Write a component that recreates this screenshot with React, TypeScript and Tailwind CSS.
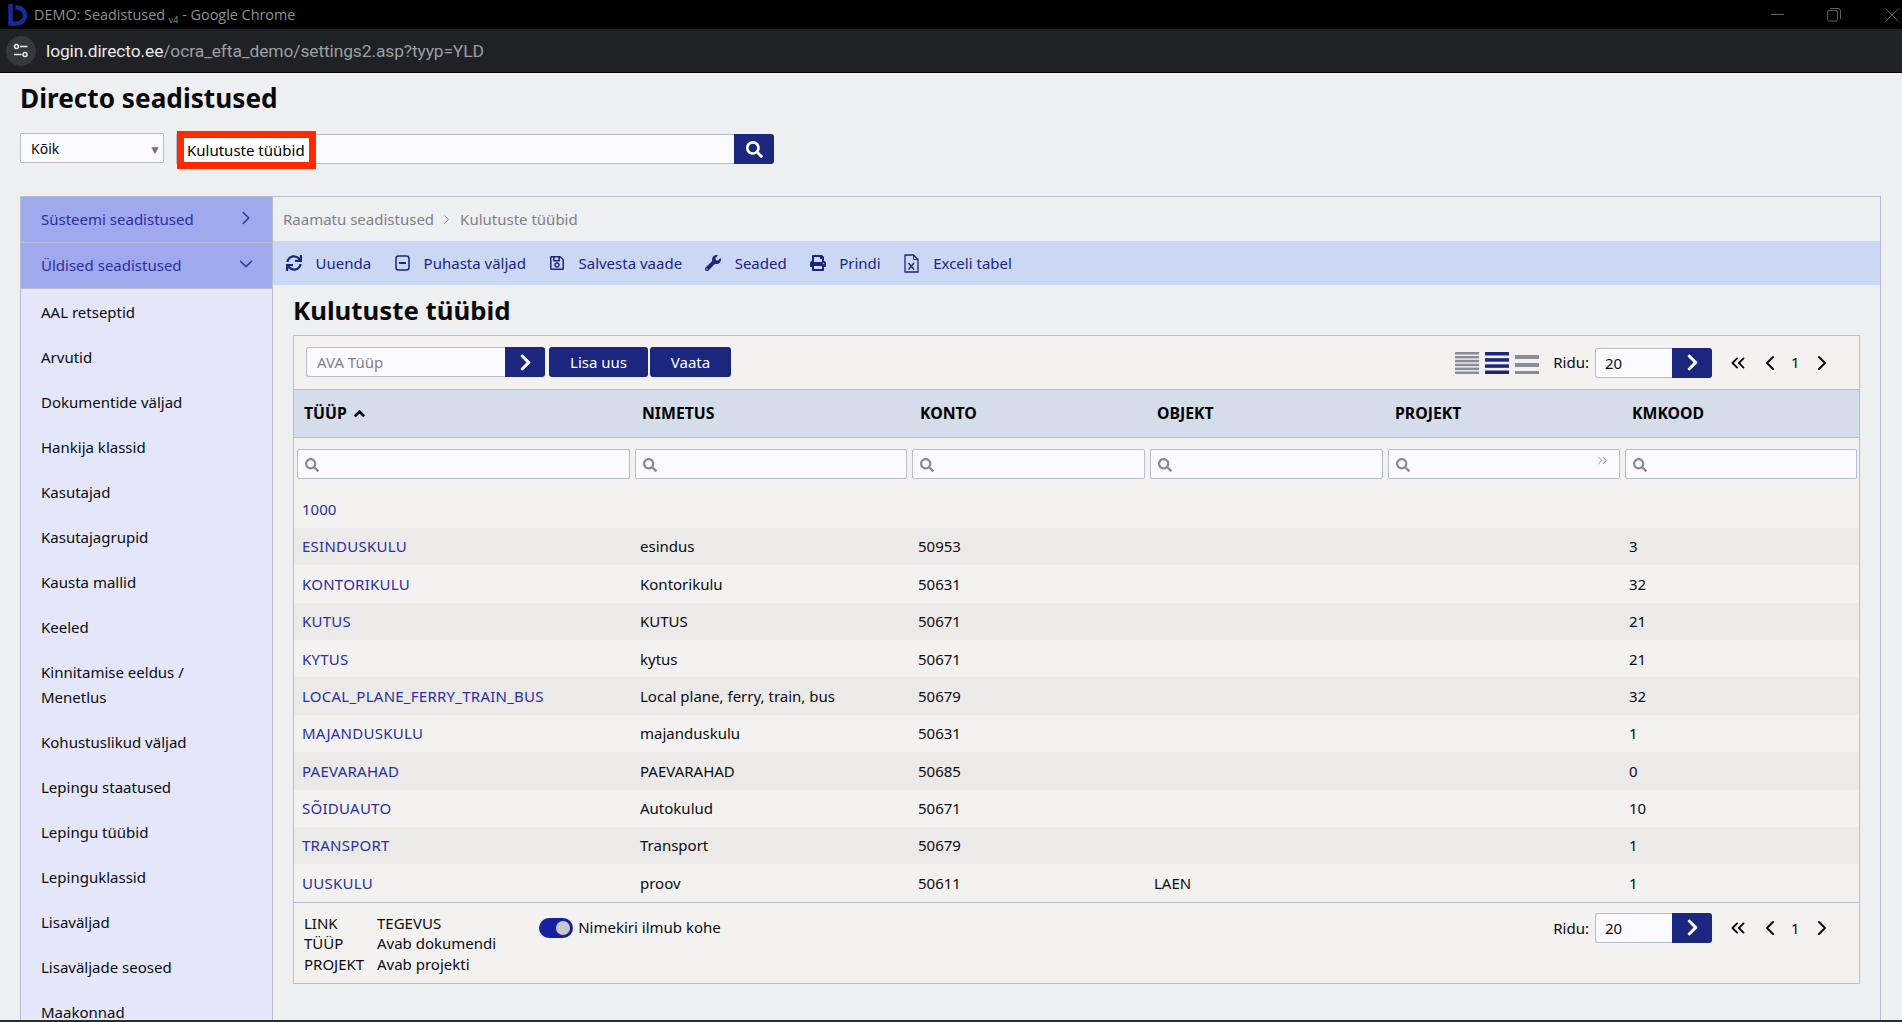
import React from "react";
import { FaSearch, FaSync, FaRegSave, FaWrench, FaPrint, FaChevronRight, FaAngleUp } from "react-icons/fa";
import { ChevronLeft, ChevronRight, ChevronsLeft, ChevronsRight, ChevronDown } from "lucide-react";

const sideItems = [
  "AAL retseptid", "Arvutid", "Dokumentide väljad", "Hankija klassid", "Kasutajad", "Kasutajagrupid",
  "Kausta mallid", "Keeled", "Kinnitamise eeldus / Menetlus", "Kohustuslikud väljad", "Lepingu staatused",
  "Lepingu tüübid", "Lepinguklassid", "Lisaväljad", "Lisaväljade seosed", "Maakonnad",
];

const rows = [
  ["ESINDUSKULU", "esindus", "50953", "", "", "3"],
  ["KONTORIKULU", "Kontorikulu", "50631", "", "", "32"],
  ["KUTUS", "KUTUS", "50671", "", "", "21"],
  ["KYTUS", "kytus", "50671", "", "", "21"],
  ["LOCAL_PLANE_FERRY_TRAIN_BUS", "Local plane, ferry, train, bus", "50679", "", "", "32"],
  ["MAJANDUSKULU", "majanduskulu", "50631", "", "", "1"],
  ["PAEVARAHAD", "PAEVARAHAD", "50685", "", "", "0"],
  ["SÕIDUAUTO", "Autokulud", "50671", "", "", "10"],
  ["TRANSPORT", "Transport", "50679", "", "", "1"],
  ["UUSKULU", "proov", "50611", "LAEN", "", "1"],
];

function MinusSquare() {
  return (
    <svg width="15" height="16" viewBox="0 0 15 16" fill="none" stroke="currentColor" strokeWidth="1.500">
      <rect x="1" y="1" width="13" height="14" rx="2.500" />
      <path d="M4 8h7" strokeWidth="2" />
    </svg>
  );
}

function ExcelFile() {
  return (
    <svg width="15" height="19" viewBox="0 0 15 19" fill="none" stroke="currentColor" strokeWidth="1.300">
      <path d="M1 1h8.500L14 5.500V18H1z" />
      <path d="M9.500 1v4.500H14" strokeWidth="1" />
      <path d="M4.500 9l5.500 6.500M10 9l-5.500 6.500" strokeWidth="1.500" />
    </svg>
  );
}

const toolbar = [
  { icon: <FaSync size={16} />, label: "Uuenda", cls: "" },
  { icon: <MinusSquare />, label: "Puhasta väljad", cls: "ml-[23px]" },
  { icon: <FaRegSave size={16} />, label: "Salvesta vaade", cls: "ml-[23px]" },
  { icon: <FaWrench size={16} />, label: "Seaded", cls: "ml-[23px]" },
  { icon: <FaPrint size={16} />, label: "Prindi", cls: "ml-[23px]" },
  { icon: <ExcelFile />, label: "Exceli tabel", cls: "ml-[23px]" },
];

function Density({ bars, h, color }: { bars: number; h: number; color: string }) {
  const step = bars === 3 ? 8 : (22 - h) / (bars - 1);
  const top = bars === 3 ? 3 : 0;
  return (
    <svg width="24" height="22" viewBox="0 0 24 22" className="block">
      {Array.from({ length: bars }).map((_, i) => (
        <rect key={i} x="0" y={top + i * step} width="24" height={h} fill={color} />
      ))}
    </svg>
  );
}

function Pager() {
  return (
    <div className="flex items-center text-[#0b0b12]">
      <span className="text-[15px] mr-[6px]">Ridu:</span>
      <div className="flex h-[30px] w-[117px]">
        <input readOnly value="20" className="w-[77px] h-full border border-[#b5bdcf] border-r-0 rounded-l-[3px] bg-[#fbfbff] pl-[9px] text-[15px] outline-none text-[#0b0b12]" />
        <button className="w-[40px] h-full bg-[#1b267f] rounded-r-[3px] flex items-center justify-center text-white"><FaChevronRight size={19} /></button>
      </div>
      <ChevronsLeft size={22} strokeWidth={2} className="ml-[15px]" />
      <ChevronLeft size={24} strokeWidth={2} className="ml-[9px]" />
      <span className="text-[15px] ml-[9px] w-[9px]">1</span>
      <ChevronRight size={24} strokeWidth={2} className="ml-[10px]" />
      <span className="w-[25px]" />
    </div>
  );
}

export default function App() {
  return (
    <div className="h-[1022px] w-[1902px] overflow-hidden flex flex-col bg-[#eeeff1] text-[15px] font-['Noto_Sans','Open_Sans',sans-serif] text-[#0b0b12]">
      {/* window title bar */}
      <div className="h-[29px] shrink-0 bg-black flex items-center">
        <svg width="22" height="24" viewBox="0 0 22 24" className="ml-[6px]" fill="none" stroke="#1b2a9a" strokeWidth="4.500">
          <path d="M4.500 1v19.500h6.500a8 8 0 0 0 0-16h-1.500" />
        </svg>
        <span className="ml-[6px] text-[14.400px] text-[#8f8f8f] font-['Open_Sans',sans-serif]">DEMO: Seadistused <span className="text-[9px] relative top-[3px]">v4</span> - Google Chrome</span>
        <div className="ml-auto flex items-center">
          <span className="block w-[13px] h-px bg-[#5f5f5f] mr-[43px]" />
          <svg width="14" height="14" viewBox="0 0 14 14" className="mr-[44px]" fill="none" stroke="#5f5f5f">
            <rect x="0.500" y="2.500" width="10" height="10.500" rx="1.500" />
            <path d="M3 .5h8.500a2 2 0 0 1 2 2V11" />
          </svg>
          <svg width="14" height="14" viewBox="0 0 14 14" className="mr-[3px]" stroke="#5f5f5f" fill="none">
            <path d="M.5.5l13 13M13.500.5l-13 13" />
          </svg>
        </div>
      </div>
      {/* address bar */}
      <div className="h-[44px] shrink-0 bg-[#202124] border-b border-black flex items-center">
        <div className="ml-[6px] w-[30px] h-[30px] rounded-full bg-[#37383b] flex items-center justify-center">
          <svg width="16" height="16" viewBox="0 0 16 16" fill="none" stroke="#e8eaed" strokeWidth="1.500">
            <circle cx="3.500" cy="3.500" r="2" /><path d="M7 3.500h7.500" />
            <circle cx="12" cy="11.500" r="2" /><path d="M1 11.500h7.500" />
          </svg>
        </div>
        <span className="ml-[10px] pt-px text-[17.400px] tracking-[-0.1px] font-['Roboto',sans-serif] text-[#9aa0a6]"><span className="text-[#e8eaed]">login.directo.ee</span>/ocra_efta_demo/settings2.asp?tyyp=YLD</span>
      </div>

      {/* page header */}
      <h1 className="ml-5 mt-[7px] h-[36px] leading-[36px] text-[26.200px] font-bold text-[#0a0a0a] shrink-0">Directo seadistused</h1>
      <div className="ml-5 mt-[17px] h-[30px] flex shrink-0">
        <div className="w-[144px] h-[30px] border border-[#b5bdcf] rounded-[2px] bg-[#fbfbff] flex items-center pl-[10px] relative text-[14px]">
          Kõik
          <span className="absolute right-[2px] top-[7px] text-[12px] text-[#6d7280]">▼</span>
        </div>
        <div className="ml-[12px] mt-[1px] w-[558px] h-[30px] border border-[#b5bdcf] border-r-0 bg-[#fbfbff] relative">
          <div className="absolute left-[0px] top-[-4px] w-[139px] h-[38px] border-[7px] border-[#ff2a00] bg-white flex items-center text-[15px] whitespace-nowrap overflow-hidden pl-[3px] text-black">
            Kulutuste tüübid
          </div>
        </div>
        <button className="mt-[1px] w-[40px] h-[30px] bg-[#1b267f] rounded-r-[3px] flex items-center justify-center text-white"><FaSearch size={17} /></button>
      </div>

      {/* main */}
      <div className="ml-5 mr-[21px] mt-[33px] flex-1 min-h-0 flex border-t border-l border-r border-[#b5bdcf] overflow-hidden">
        <aside className="w-[252px] shrink-0 bg-[#e4e7f9] border-r border-[#b5bdcf] flex flex-col">
          <div className="h-[45.500px] shrink-0 bg-[#a0a8ee] border-b border-[#b5bdcf] flex items-center pl-[20px] pr-[15px] text-[#2a2fa0]">
            <span className="flex-1">Süsteemi seadistused</span>
            <ChevronRight size={22} strokeWidth={1.500} className="mb-[3px]" />
          </div>
          <div className="h-[46px] shrink-0 bg-[#a0a8ee] border-b border-[#b5bdcf] flex items-center pl-[20px] pr-[15px] text-[#2a2fa0]">
            <span className="flex-1">Üldised seadistused</span>
            <ChevronDown size={22} strokeWidth={1.500} className="mb-[3px]" />
          </div>
          {sideItems.map((s) => (
            <div key={s} className="pl-[20px] pr-[50px] pt-[11px] pb-[8.600px] leading-[25.400px] shrink-0">{s}</div>
          ))}
        </aside>

        <main className="flex-1 min-w-0 flex flex-col">
          <div className="h-[44px] shrink-0 flex items-center pl-[10px] text-[#7f8088]">
            Raamatu seadistused
            <ChevronRight size={15} strokeWidth={1.500} className="ml-[5px] mr-[6px]" />
            Kulutuste tüübid
          </div>
          <div className="h-[44px] shrink-0 bg-[#cad7f5] flex items-center pl-[13px] text-[#1b267f]">
            {toolbar.map(({ icon, label, cls }) => (
              <span key={label} className={`flex items-center ${cls}`}>
                <span className="w-[16px] flex justify-center">{icon}</span>
                <span className="ml-[13.500px]">{label}</span>
              </span>
            ))}
          </div>
          <h2 className="ml-[20px] h-[50px] leading-[50px] text-[25.800px] font-bold text-[#0a0a0a] shrink-0">Kulutuste tüübid</h2>

          <section className="ml-[20px] mr-[20px] h-[649px] shrink-0 border border-[#b5bdcf] bg-[#f3f2f0] flex flex-col">
            <div className="h-[53px] shrink-0 flex items-center pl-[12px]">
              <div className="flex mb-px">
                <input readOnly placeholder="AVA Tüüp" className="w-[199px] h-[30px] border border-[#b5bdcf] border-r-0 rounded-l-[3px] bg-[#fbfbff] pl-[10px] text-[15px] outline-none placeholder:text-[#7f8088]" />
                <button className="w-[40px] h-[30px] bg-[#1b267f] rounded-r-[3px] flex items-center justify-center text-white"><FaChevronRight size={19} /></button>
              </div>
              <button className="ml-[4px] w-[99px] h-[30px] bg-[#1b267f] rounded-[3px] text-white mb-px">Lisa uus</button>
              <button className="ml-[2px] w-[81px] h-[30px] bg-[#1b267f] rounded-[3px] text-white mb-px">Vaata</button>
              <div className="ml-auto flex items-center">
                <Density bars={6} h={2.500} color="#8a8c9c" />
                <span className="w-[6px]" />
                <Density bars={4} h={3.500} color="#1b267f" />
                <span className="w-[6px]" />
                <Density bars={3} h={4} color="#8a8c9c" />
                <span className="w-[14px]" />
                <Pager />
              </div>
            </div>

            <table className="w-full table-fixed border-collapse shrink-0">
              <colgroup>
                <col className="w-[338px]" />
                <col className="w-[277px]" />
                <col className="w-[238px]" />
                <col className="w-[238px]" />
                <col className="w-[237px]" />
                <col />
              </colgroup>
              <thead>
                <tr className="h-[48px] bg-[#d5dcea] border-y border-[#b5bdcf] text-[15.800px] text-left text-black">
                  <th className="pl-[10px] font-bold"><span className="inline-flex items-center">TÜÜP<FaAngleUp size={17} className="ml-[4px]" /></span></th>
                  <th className="pl-[10px] font-bold">NIMETUS</th>
                  <th className="pl-[11px] font-bold">KONTO</th>
                  <th className="pl-[10px] font-bold">OBJEKT</th>
                  <th className="pl-[10px] font-bold">PROJEKT</th>
                  <th className="pl-[10px] font-bold">KMKOOD</th>
                </tr>
              </thead>
              <tbody>
                <tr className="h-[53px]">
                  {[0, 1, 2, 3, 4, 5].map((i) => (
                    <td key={i} className="pl-[3px] pr-[2px] align-top pt-[11px]">
                      <div className="h-[30px] border border-[#b5bdcf] rounded-[2px] bg-[#fbfbff] flex items-center pl-[7px] text-[#8a8a94] relative">
                        <FaSearch size={14} className="mt-[1px]" />
                        {i === 4 && <ChevronsRight size={15} strokeWidth={1.500} className="absolute right-[9px] top-[3px] text-[#7d849c]" />}
                      </div>
                    </td>
                  ))}
                </tr>
                <tr className="h-[37.400px]">
                  <td className="pl-[8px] text-[#2a2fa0]">1000</td>
                  <td colSpan={5} />
                </tr>
                {rows.map((r, i) => (
                  <tr key={r[0]} className={`h-[37.400px] ${i % 2 === 0 ? "bg-[#ebeae8]" : ""}`}>
                    <td className="pl-[8px] text-[#2a2fa0] tracking-[0.250px] whitespace-nowrap">{r[0]}</td>
                    <td className="pl-[8px] whitespace-nowrap">{r[1]}</td>
                    <td className="pl-[9px] whitespace-nowrap">{r[2]}</td>
                    <td className="pl-[7px] whitespace-nowrap">{r[3]}</td>
                    <td className="pl-[7px] whitespace-nowrap">{r[4]}</td>
                    <td className="pl-[7px] whitespace-nowrap">{r[5]}</td>
                  </tr>
                ))}
              </tbody>
            </table>

            <div className="flex-1 border-t border-[#b5bdcf] flex items-start pl-[10px] pt-[10px]">
              <div className="grid grid-cols-[73px_auto] leading-[20.500px] text-[15px]">
                <span>LINK</span><span>TEGEVUS</span>
                <span>TÜÜP</span><span>Avab dokumendi</span>
                <span>PROJEKT</span><span>Avab projekti</span>
              </div>
              <div className="ml-[43px] mt-[3px] flex items-center">
                <span className="w-[34px] h-[20px] rounded-full bg-[#16229c] flex items-center justify-end pr-[3px]">
                  <span className="w-[14px] h-[14px] rounded-full bg-[#ccc8c8]" />
                </span>
                <span className="ml-[5px] mb-[2px]">Nimekiri ilmub kohe</span>
              </div>
              <div className="ml-auto"><Pager /></div>
            </div>
          </section>
        </main>
      </div>
      <div className="h-[2px] shrink-0 bg-[#2b2b2b]" />
    </div>
  );
}
